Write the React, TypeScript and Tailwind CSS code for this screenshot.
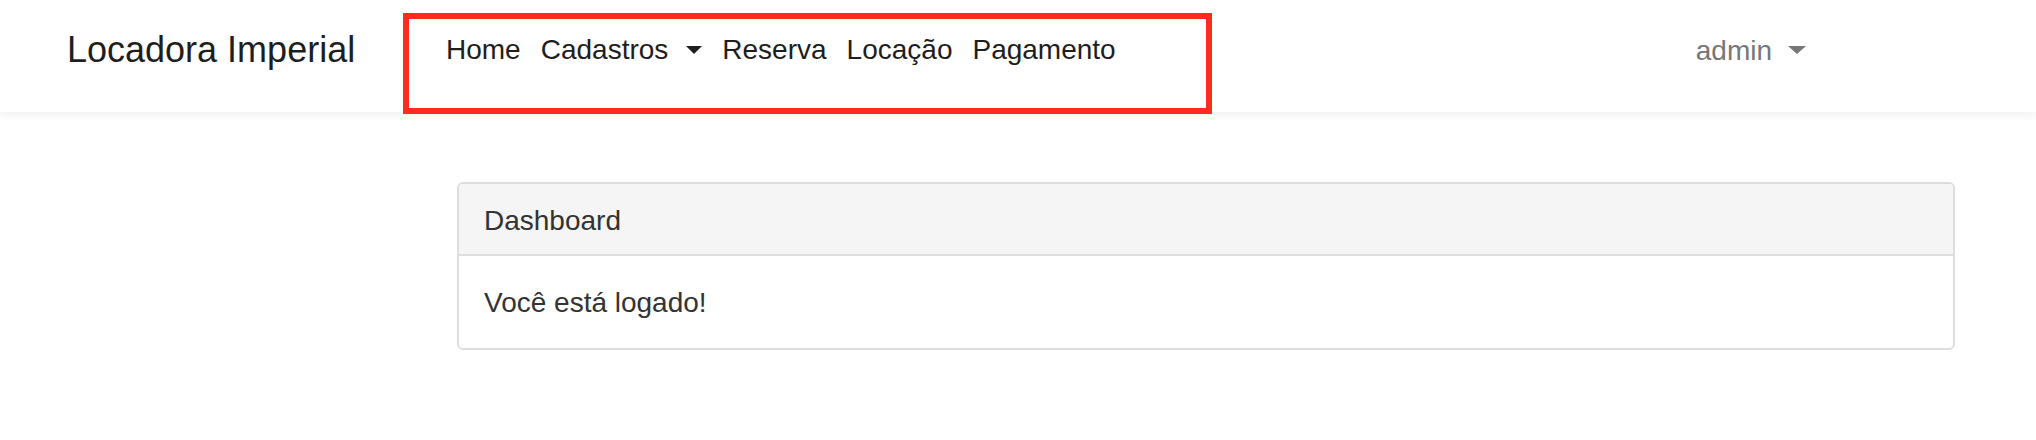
const links = ["Home", "Cadastros", "Reserva", "Locação", "Pagamento"];

const Caret = ({ className }: { className: string }) => (
  <span className={"inline-block w-0 h-0 border-x-transparent border-b-0 " + className} />
);

const App = () => {
  return (
    <div className="min-h-[440px] bg-white font-['Liberation_Sans',Arial,sans-serif] text-[#333]">
      <header className="relative z-10 h-[112px] bg-white shadow-[0_4px_8px_rgba(0,0,0,0.05)]">
        <div className="flex h-full items-start">
          <div className="w-[403px] shrink-0 pl-[67px] mt-[30px]">
            <span className="text-[36px] leading-[40px] text-[#1e1e1e]">Locadora Imperial</span>
          </div>

          {/* destaque em volta do menu */}
          <ul className="mt-[13px] h-[101px] w-[809px] shrink-0 border-[6px] border-[#ff2b1f] flex items-start pl-[27px] pt-[15px]">
            {links.map((l) => (
              <li
                key={l}
                className="flex items-center text-[28px] leading-[32px] text-[#1e1e1e] px-[10px]"
              >
                {l}
                {l === "Cadastros" && (
                  <Caret className="ml-[18px] border-x-[8px] border-t-[8px] border-t-[#1e1e1e]" />
                )}
              </li>
            ))}
          </ul>

          <div className="flex-1" />
          <div className="flex items-center mt-[35px] pr-[230px] text-[28px] leading-[32px] text-[#777]">
            admin
            <Caret className="ml-[16px] -mt-[3px] border-x-[9px] border-t-[8px] border-t-[#777]" />
          </div>
        </div>
      </header>

      <main className="pt-[70px] pl-[457px]">
        <div className="w-[1498px] rounded-[6px] border-2 border-[#dddddd] bg-white overflow-hidden">
          <div className="bg-[#f5f5f5] border-b-2 border-[#dddddd] pl-[25px] pt-[23px] pb-[19px] text-[28px] leading-[28px]">
            Dashboard
          </div>
          <div className="pl-[25px] pt-[33px] pb-[31px] text-[28px] leading-[28px]">
            Você está logado!
          </div>
        </div>
      </main>
    </div>
  );
};

export default App;
